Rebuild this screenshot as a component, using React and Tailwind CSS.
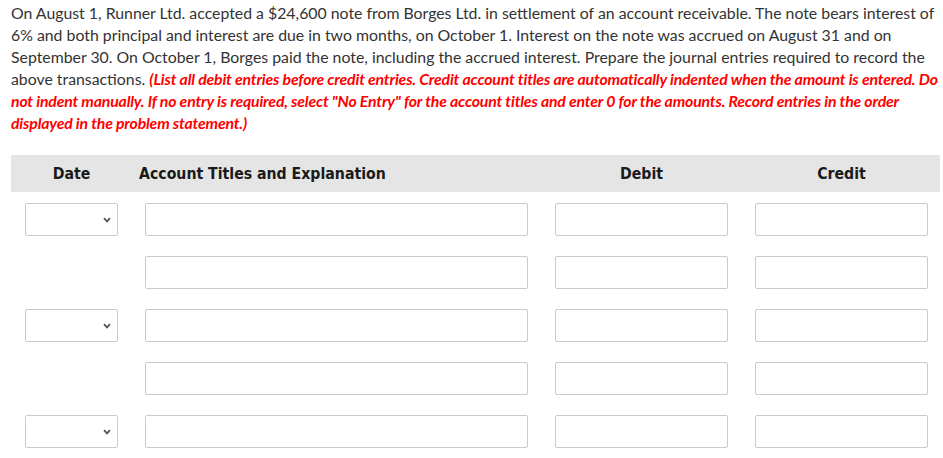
import React from "react";

function Chevron() {
  return (
    <svg width="8" height="6" viewBox="0 0 8 6" className="absolute right-[6px] top-1/2 -translate-y-1/2">
      <path d="M1 1.2 L4 4.4 L7 1.2" fill="none" stroke="#555" strokeWidth="1.8" />
    </svg>
  );
}

function Box({ className = "" }) {
  return <div className={"h-[33px] border border-[#cacaca] rounded-[2px] bg-white " + className}></div>;
}

function Row({ date }) {
  return (
    <>
      {date ? (
        <div className="relative h-[33px] border border-[#cacaca] rounded-[2px] bg-white">
          <Chevron />
        </div>
      ) : (
        <div></div>
      )}
      <Box />
      <Box />
      <Box />
    </>
  );
}

export default function App() {
  return (
    <div className="bg-white w-[943px] h-[458px] overflow-hidden">
      <div className="pl-[11px] pt-[2px] text-[15.83px] leading-[22px] text-[#333] whitespace-nowrap font-['Lato',sans-serif]">
        On August 1, Runner Ltd. accepted a $24,600 note from Borges Ltd. in settlement of an account receivable. The note bears interest of
        <br />
        6% and both principal and interest are due in two months, on October 1. Interest on the note was accrued on August 31 and on
        <br />
        September 30. On October 1, Borges paid the note, including the accrued interest. Prepare the journal entries required to record the
        <br />
        above transactions.{" "}
        <span className="text-[#f00] font-bold italic tracking-[-0.18px]">
          (List all debit entries before credit entries. Credit account titles are automatically indented when the amount is entered. Do
          <br />
          not indent manually. If no entry is required, select "No Entry" for the account titles and enter 0 for the amounts. Record entries in the order
          <br />
          displayed in the problem statement.)
        </span>
      </div>

      <div className="ml-[11px] mt-[21px] w-[929px]">
        <div className="h-[37px] bg-[#e5e5e5] pl-[14px] grid grid-cols-[93px_383px_173px_173px] gap-x-[27px] items-center font-['DejaVu_Sans_Condensed','DejaVu_Sans',sans-serif] [font-stretch:condensed] font-bold text-[15.7px] text-[#1a1a1a]">
          <div className="text-center">Date</div>
          <div className="-ml-[6px]">Account Titles and Explanation</div>
          <div className="text-center">Debit</div>
          <div className="text-center">Credit</div>
        </div>
        <div className="mt-[11px] pl-[14px] grid grid-cols-[93px_383px_173px_173px] gap-x-[27px] gap-y-[20px]">
          <Row date />
          <Row />
          <Row date />
          <Row />
          <Row date />
        </div>
      </div>
    </div>
  );
}
